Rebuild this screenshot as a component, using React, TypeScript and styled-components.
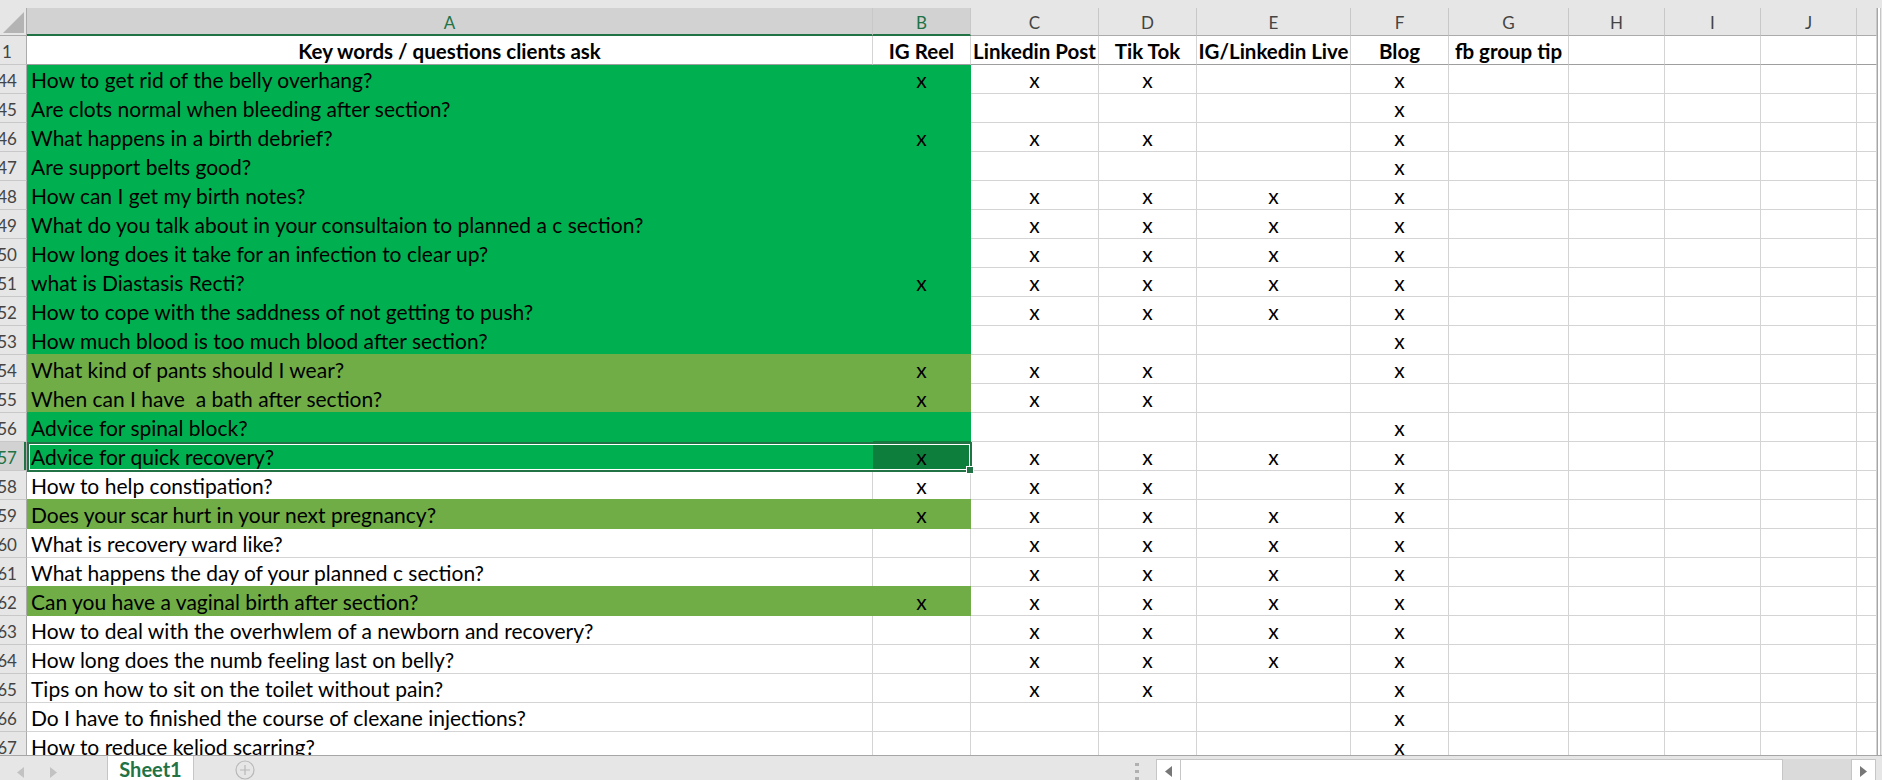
import React from 'react';
import styled, { createGlobalStyle } from 'styled-components';

const GREEN = '#00B050';
const OLIVE = '#70AD47';
const XL = '#217346';
const GRID = '#d4d4d4';
const COLS = '27px 846px 98px 128px 98px 154px 98px 120px 96px 96px 96px 20px';
const FONT = `"Lato", "Liberation Sans", sans-serif`;

const GlobalStyle = createGlobalStyle`
  html, body { margin: 0; padding: 0; background: #fff; overflow: hidden; }
  body { font-family: ${FONT}; }
`;

const Page = styled.div`
  width: 1882px;
  height: 780px;
  display: flex;
  flex-direction: column;
  overflow: hidden;
  background: #fff;
  font-family: ${FONT};
`;

const TopStrip = styled.div`
  height: 8px;
  flex: none;
  background: #e6e6e6;
`;

const Main = styled.div`
  flex: 1;
  display: flex;
  min-height: 0;
`;

const Pane = styled.div`
  width: 1877px;
  display: flex;
  flex-direction: column;
  min-height: 0;
`;

const VScroll = styled.div`
  width: 5px;
  box-sizing: border-box;
  border-left: 1px solid #a6a6a6;
  background: linear-gradient(to right, #fff 0 2px, #c6c6c6 2px 3px, #e6e6e6 3px);
`;

const HeaderRow = styled.div`
  display: grid;
  grid-template-columns: ${COLS};
  height: 28px;
  flex: none;
`;

const Corner = styled.div`
  box-sizing: border-box;
  background: #e6e6e6;
  border-right: 1px solid #ababab;
  border-bottom: 1px solid #ababab;
  display: flex;
  justify-content: flex-end;
  align-items: flex-end;
  padding: 0 2px 2px 0;
`;

const ColHead = styled.div<{ $active?: boolean }>`
  box-sizing: border-box;
  display: flex;
  justify-content: center;
  align-items: flex-end;
  padding-bottom: ${(p) => (p.$active ? 1 : 2)}px;
  background: ${(p) => (p.$active ? '#d2d2d2' : '#e6e6e6')};
  border-right: 1px solid #c8c8c8;
  border-bottom: ${(p) => (p.$active ? `2px solid ${XL}` : '1px solid #ababab')};
  color: ${(p) => (p.$active ? XL : '#444')};
  font-size: 17px;
  line-height: 20px;
  overflow: hidden;
`;

const Body = styled.div`
  flex: 1;
  overflow: hidden;
`;

const Row = styled.div`
  display: grid;
  grid-template-columns: ${COLS};
  height: 29px;
  position: relative;
`;

const RowNum = styled.div<{ $active?: boolean }>`
  box-sizing: border-box;
  display: flex;
  align-items: flex-end;
  padding-bottom: 2px;
  background: ${(p) => (p.$active ? '#d2d2d2' : '#e6e6e6')};
  border-right: 1px solid #ababab;
  border-bottom: 1px solid #c8c8c8;
  box-shadow: ${(p) => (p.$active ? `inset -2px 0 0 ${XL}` : 'none')};
  color: ${(p) => (p.$active ? XL : '#444')};
  font-size: 17px;
  line-height: 20px;
  overflow: hidden;
`;

const NumText = styled.span`
  width: 14px;
  flex: none;
  display: flex;
  justify-content: center;
  white-space: nowrap;
`;

const Cell = styled.div<{
  $fill?: string;
  $center?: boolean;
  $bold?: boolean;
  $freeze?: boolean;
  $coverTop?: boolean;
}>`
  box-sizing: border-box;
  display: flex;
  align-items: flex-end;
  justify-content: ${(p) => (p.$center ? 'center' : 'flex-start')};
  padding: ${(p) => (p.$center ? '0 2px 1px 2px' : '0 3px 1px 4px')};
  background: ${(p) => p.$fill ?? '#fff'};
  border-right: 1px solid ${(p) => p.$fill ?? GRID};
  border-bottom: 1px solid ${(p) => (p.$freeze ? '#9e9e9e' : p.$fill ?? GRID)};
  box-shadow: ${(p) => (p.$fill && p.$coverTop ? `0 -1px 0 ${p.$fill}` : 'none')};
  font-size: ${(p) => (p.$bold ? 20.5 : 21)}px;
  line-height: 24px;
  font-weight: ${(p) => (p.$bold ? 700 : 400)};
  color: #000;
  white-space: nowrap;
  overflow: hidden;
`;

const Selection = styled.div`
  position: absolute;
  left: 27px;
  top: 0;
  width: 945px;
  height: 30px;
  box-sizing: border-box;
  border: 2px solid ${XL};
  box-shadow: inset 0 0 0 1px #fff;
  pointer-events: none;
  z-index: 2;
`;

const Handle = styled.div`
  position: absolute;
  right: -4px;
  bottom: -4px;
  width: 8px;
  height: 8px;
  box-sizing: border-box;
  background: ${XL};
  border: 1px solid #fff;
`;

const BottomBar = styled.div`
  height: 25px;
  flex: none;
  box-sizing: border-box;
  border-top: 1px solid #a6a6a6;
  background: #e6e6e6;
  display: flex;
  overflow: hidden;
`;

const NavArea = styled.div`
  width: 107px;
  flex: none;
  box-sizing: border-box;
  padding-left: 4px;
  display: flex;
`;

const NavBtn = styled.div`
  width: 33px;
  box-sizing: border-box;
  padding-top: 8px;
  display: flex;
  align-items: center;
  justify-content: center;
`;

const SheetTab = styled.div`
  width: 87px;
  flex: none;
  box-sizing: border-box;
  background: #fff;
  border-left: 1px solid #c6c6c6;
  border-right: 1px solid #c6c6c6;
  display: flex;
  justify-content: center;
  align-items: flex-start;
  padding-top: 1px;
  color: ${XL};
  font-weight: 700;
  font-size: 20px;
  line-height: 24px;
`;

const AddArea = styled.div`
  flex: 1;
  display: flex;
  align-items: flex-start;
  padding: 4px 0 0 41px;
`;

const Splitter = styled.div`
  width: 22px;
  flex: none;
  box-sizing: border-box;
  padding: 7px 0 0 1px;
  display: flex;
  flex-direction: column;
  gap: 4px;
`;

const Dot = styled.span`
  width: 4px;
  height: 3px;
  background: #b0b0b0;
`;

const HScroll = styled.div`
  width: 720px;
  flex: none;
  box-sizing: border-box;
  padding-top: 3px;
  display: flex;
`;

const ScrollBtn = styled.div`
  width: 25px;
  height: 24px;
  flex: none;
  box-sizing: border-box;
  background: #fff;
  border: 1px solid #c6c6c6;
  display: flex;
  align-items: center;
  justify-content: center;
`;

const Thumb = styled.div`
  width: 602px;
  height: 24px;
  flex: none;
  box-sizing: border-box;
  background: #fff;
  border-top: 1px solid #c6c6c6;
  border-right: 1px solid #c6c6c6;
`;

const Track = styled.div`
  width: 68px;
  height: 24px;
  flex: none;
  background: #dadada;
`;

const RightPad = styled.div`
  width: 6px;
  flex: none;
`;

type Fill = 'g' | 'o' | undefined;
type DataRow = { n: number; q: string; m: string; f?: Fill; sel?: boolean };

const ROWS: DataRow[] = [
  { n: 44, q: 'How to get rid of the belly overhang?', m: 'BCDF', f: 'g' },
  { n: 45, q: 'Are clots normal when bleeding after section?', m: 'F', f: 'g' },
  { n: 46, q: 'What happens in a birth debrief?', m: 'BCDF', f: 'g' },
  { n: 47, q: 'Are support belts good?', m: 'F', f: 'g' },
  { n: 48, q: 'How can I get my birth notes?', m: 'CDEF', f: 'g' },
  { n: 49, q: 'What do you talk about in your consultaion to planned a c section?', m: 'CDEF', f: 'g' },
  { n: 50, q: 'How long does it take for an infection to clear up?', m: 'CDEF', f: 'g' },
  { n: 51, q: 'what is Diastasis Recti?', m: 'BCDEF', f: 'g' },
  { n: 52, q: 'How to cope with the saddness of not getting to push?', m: 'CDEF', f: 'g' },
  { n: 53, q: 'How much blood is too much blood after section?', m: 'F', f: 'g' },
  { n: 54, q: 'What kind of pants should I wear?', m: 'BCDF', f: 'o' },
  { n: 55, q: 'When can I have \u00a0a bath after section?', m: 'BCD', f: 'o' },
  { n: 56, q: 'Advice for spinal block?', m: 'F', f: 'g' },
  { n: 57, q: 'Advice for quick recovery?', m: 'BCDEF', f: 'g', sel: true },
  { n: 58, q: 'How to help constipation?', m: 'BCDF' },
  { n: 59, q: 'Does your scar hurt in your next pregnancy?', m: 'BCDEF', f: 'o' },
  { n: 60, q: 'What is recovery ward like?', m: 'CDEF' },
  { n: 61, q: 'What happens the day of your planned c section?', m: 'CDEF' },
  { n: 62, q: 'Can you have a vaginal birth after section?', m: 'BCDEF', f: 'o' },
  { n: 63, q: 'How to deal with the overhwlem of a newborn and recovery?', m: 'CDEF' },
  { n: 64, q: 'How long does the numb feeling last on belly?', m: 'CDEF' },
  { n: 65, q: 'Tips on how to sit on the toilet without pain?', m: 'CDF' },
  { n: 66, q: 'Do I have to finished the course of clexane injections?', m: 'F' },
  { n: 67, q: 'How to reduce keliod scarring?', m: 'F' },
];

const LETTERS = ['A', 'B', 'C', 'D', 'E', 'F', 'G', 'H', 'I', 'J', ''];
const HEADINGS = ['IG Reel', 'Linkedin Post', 'Tik Tok', 'IG/Linkedin Live', 'Blog', 'fb group tip'];
const MARK_COLS = ['C', 'D', 'E', 'F'];
const EMPTY_COLS = ['G', 'H', 'I', 'J', 'K'];

const fillOf = (f: Fill) => (f === 'g' ? GREEN : f === 'o' ? OLIVE : undefined);

const Tri = ({ dir, color }: { dir: 'l' | 'r'; color: string }) => (
  <svg width="7" height="11" viewBox="0 0 7 11">
    <path d={dir === 'l' ? 'M7 0 L0 5.5 L7 11 Z' : 'M0 0 L7 5.5 L0 11 Z'} fill={color} />
  </svg>
);

export default function App() {
  return (
    <>
      <GlobalStyle />
      <Page>
        <TopStrip />
        <Main>
          <Pane>
            <HeaderRow>
              <Corner>
                <svg width="21" height="21" viewBox="0 0 21 21">
                  <path d="M21 0 L21 21 L0 21 Z" fill="#b4b4b4" />
                </svg>
              </Corner>
              {LETTERS.map((l, i) => (
                <ColHead key={i} $active={l === 'A' || l === 'B'}>
                  {l}
                </ColHead>
              ))}
            </HeaderRow>
            <Body>
              <Row>
                <RowNum>
                  <NumText>1</NumText>
                </RowNum>
                <Cell $center $bold $freeze>
                  Key words / questions clients ask
                </Cell>
                {HEADINGS.map((h) => (
                  <Cell key={h} $center $bold $freeze>
                    {h}
                  </Cell>
                ))}
                {['H', 'I', 'J', 'K'].map((k) => (
                  <Cell key={k} $freeze />
                ))}
              </Row>
              {ROWS.map((r, idx) => {
                const fill = fillOf(r.f);
                const coverTop = idx > 0;
                return (
                  <Row key={r.n}>
                    <RowNum $active={r.sel}>
                      <NumText>{r.n}</NumText>
                    </RowNum>
                    <Cell $fill={fill} $coverTop={coverTop}>
                      {r.q}
                    </Cell>
                    <Cell
                      $center
                      $fill={r.sel ? '#0e7e3d' : fill}
                      $coverTop={coverTop}
                    >
                      {r.m.includes('B') ? 'x' : ''}
                    </Cell>
                    {MARK_COLS.map((c) => (
                      <Cell key={c} $center>
                        {r.m.includes(c) ? 'x' : ''}
                      </Cell>
                    ))}
                    {EMPTY_COLS.map((c) => (
                      <Cell key={c} />
                    ))}
                    {r.sel && (
                      <Selection>
                        <Handle />
                      </Selection>
                    )}
                  </Row>
                );
              })}
            </Body>
          </Pane>
          <VScroll />
        </Main>
        <BottomBar>
          <NavArea>
            <NavBtn>
              <Tri dir="l" color="#c2c2c2" />
            </NavBtn>
            <NavBtn>
              <Tri dir="r" color="#c2c2c2" />
            </NavBtn>
          </NavArea>
          <SheetTab>Sheet1</SheetTab>
          <AddArea>
            <svg width="20" height="20" viewBox="0 0 20 20">
              <circle cx="10" cy="10" r="9" fill="none" stroke="#b8b8b8" strokeWidth="1.2" />
              <path d="M10 5 V15 M5 10 H15" stroke="#b8b8b8" strokeWidth="1.2" />
            </svg>
          </AddArea>
          <Splitter>
            <Dot />
            <Dot />
            <Dot />
          </Splitter>
          <HScroll>
            <ScrollBtn>
              <Tri dir="l" color="#777" />
            </ScrollBtn>
            <Thumb />
            <Track />
            <ScrollBtn>
              <Tri dir="r" color="#777" />
            </ScrollBtn>
          </HScroll>
          <RightPad />
        </BottomBar>
      </Page>
    </>
  );
}
